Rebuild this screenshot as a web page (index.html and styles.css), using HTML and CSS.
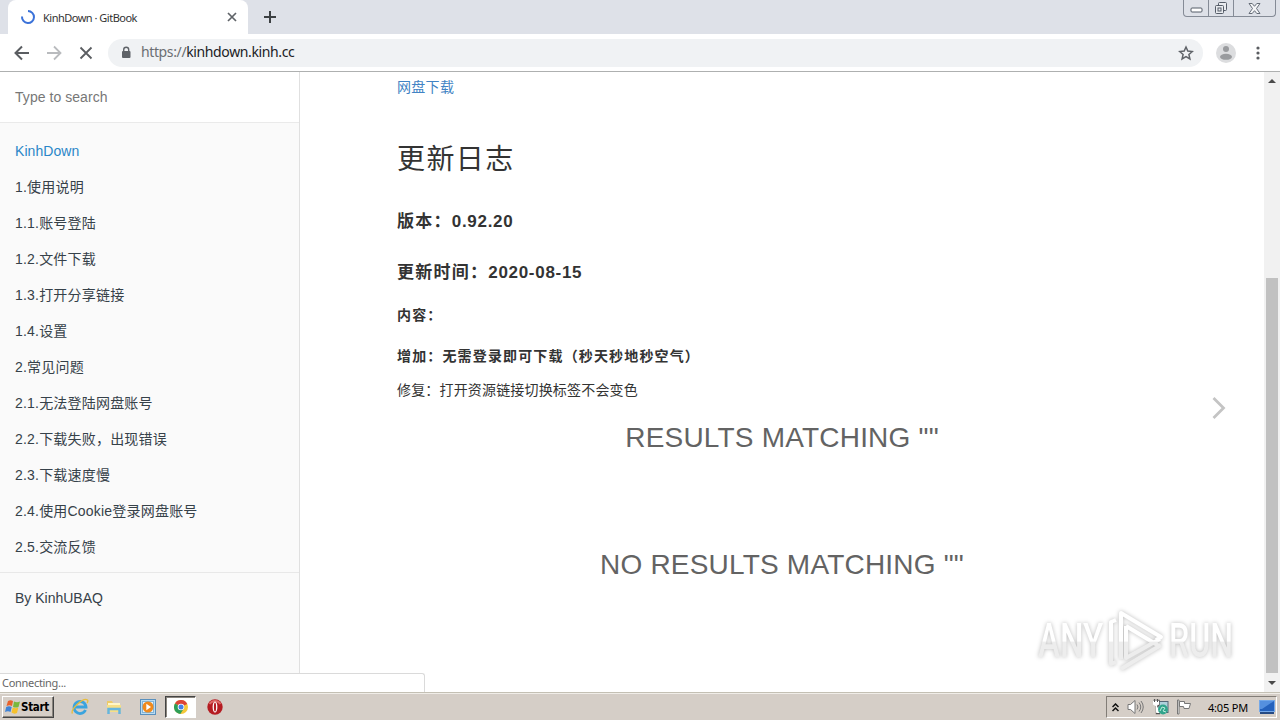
FILE: index.html
```html
<!DOCTYPE html>
<html lang="zh-CN">
<head>
    <meta charset="UTF-8">
    <meta name="viewport" content="width=device-width, initial-scale=1.0">
    <title>KinhDown · GitBook</title>
    <link rel="stylesheet" href="styles.css">
</head>
<body>

    <div class="tabstrip">
        <div class="tab">
            <svg class="spinner" width="16" height="16" viewBox="0 0 16 16"><path d="M8 2a6 6 0 1 1-6 5.5" fill="none" stroke="#3b72d9" stroke-width="2"/></svg>
            <span class="tab-title">KinhDown · GitBook</span>
            <svg class="tab-close" width="10" height="10" viewBox="0 0 10 10"><path d="M1 1l8 8M9 1l-8 8" stroke="#5f6368" stroke-width="1.7"/></svg>
        </div>
        <svg class="new-tab" width="12" height="12" viewBox="0 0 12 12"><path d="M6 0v12M0 6h12" stroke="#3c4043" stroke-width="2"/></svg>
        <div class="window-buttons">
            <span class="wb wb-min"><svg width="13" height="6" viewBox="0 0 13 6"><rect x="1" y="1" width="11" height="4" rx="1" fill="#fff" stroke="#555c68"/></svg></span>
            <span class="wb wb-max"><svg width="14" height="14" viewBox="0 0 14 14"><g fill="#e9ebef" stroke="#555c68"><rect x="4.500" y="1.500" width="8" height="8" rx="1"/><rect x="1.500" y="4.500" width="8" height="8" rx="1"/><rect x="4" y="7" width="3" height="3"/></g></svg></span>
            <span class="wb wb-close"><svg width="13" height="11" viewBox="0 0 13 11"><path d="M1 .500h3.200l2.300 2.800L8.800.500H12L8.500 5.500l3.500 5H8.800L6.500 7.700l-2.300 2.800H1l3.500-5z" fill="#f4f5f7" stroke="#666d78"/></svg></span>
        </div>
    </div>

    <div class="toolbar">
        <svg class="nav-icon" width="16" height="16" viewBox="0 0 16 16"><path d="M15 8H2M8 1.500L1.500 8 8 14.500" fill="none" stroke="#5a5d61" stroke-width="2"/></svg>
        <svg class="nav-icon" width="16" height="16" viewBox="0 0 16 16"><path d="M1 8h13M8 1.500L14.500 8 8 14.500" fill="none" stroke="#b9bbbe" stroke-width="1.800"/></svg>
        <svg class="nav-icon" width="16" height="16" viewBox="0 0 16 16"><path d="M2.500 2.500l11 11M13.500 2.500l-11 11" stroke="#5a5d61" stroke-width="1.800"/></svg>
        <div class="omnibox">
            <svg width="10" height="13" viewBox="0 0 10 13"><rect x="1" y="5" width="8.500" height="7" rx="1" fill="#5f6368"/><path d="M2.700 5.500V3.700a2.500 2.500 0 0 1 5 0v1.800" fill="none" stroke="#5f6368" stroke-width="1.400"/></svg>
            <span class="url"><span class="scheme">https://</span>kinhdown.kinh.cc</span>
            <svg class="star" width="16" height="16" viewBox="0 0 16 16"><path d="M8 2l1.800 4.100 4.500.400-3.400 3 1 4.400L8 11.600l-3.900 2.300 1-4.400-3.400-3 4.500-.400z" fill="none" stroke="#5f6368" stroke-width="1.500"/></svg>
        </div>
        <svg class="avatar" width="20" height="20" viewBox="0 0 20 20"><circle cx="10" cy="10" r="10" fill="#dcdddf"/><circle cx="10" cy="6" r="3" fill="#999b9e"/><ellipse cx="10" cy="13.800" rx="6" ry="3" fill="#999b9e"/></svg>
        <svg class="dots" width="4" height="14" viewBox="0 0 4 14"><g fill="#5a5d61"><circle cx="2" cy="2" r="1.600"/><circle cx="2" cy="7" r="1.600"/><circle cx="2" cy="12" r="1.600"/></g></svg>
    </div>

    <div class="book">
        <div class="sidebar">
            <div class="search">Type to search</div>
            <ul class="summary">
                <li class="active">KinhDown</li>
                <li>1.使用说明</li>
                <li>1.1.账号登陆</li>
                <li>1.2.文件下载</li>
                <li>1.3.打开分享链接</li>
                <li>1.4.设置</li>
                <li>2.常见问题</li>
                <li>2.1.无法登陆网盘账号</li>
                <li>2.2.下载失败，出现错误</li>
                <li>2.3.下载速度慢</li>
                <li>2.4.使用Cookie登录网盘账号</li>
                <li>2.5.交流反馈</li>
                <li class="divider"></li>
                <li class="author">By KinhUBAQ</li>
            </ul>
        </div>

        <div class="page">
            <div class="page-inner">
                <a class="top-link">网盘下载</a>
                <h1>更新日志</h1>
                <h3>版本：<b class="num">0.92.20</b></h3>
                <h3 class="date">更新时间：<b class="num">2020-08-15</b></h3>
                <h4>内容：</h4>
                <h4>增加：无需登录即可下载（秒天秒地秒空气）</h4>
                <p>修复：打开资源链接切换标签不会变色</p>
                <div class="results">RESULTS MATCHING ""</div>
                <div class="results no-results">NO RESULTS MATCHING ""</div>
            </div>
            <svg class="next" width="14" height="24" viewBox="0 0 14 24"><path d="M1.500 2l10 10-10 10" fill="none" stroke="#c4c4c4" stroke-width="2.800"/></svg>
            <div class="watermark">
                <span class="wm-text wm-any">ANY</span>
                <svg width="62" height="64" viewBox="0 0 62 64">
                    <defs>
                        <linearGradient id="fade" gradientUnits="userSpaceOnUse" x1="0" y1="0" x2="0" y2="64">
                            <stop offset=".5" stop-color="#fff"/>
                            <stop offset=".52" stop-color="#ededed"/>
                        </linearGradient>
                    </defs>
                    <path d="M11 11L6 13v42l5-2M16 50V4l40 24-5 3M21 17l33 20M21 17v32l34-19M16 60l40-24" fill="none" stroke="url(#fade)" stroke-width="4" stroke-linejoin="round"/>
                </svg>
                <span class="wm-text wm-run">RUN</span>
            </div>
        </div>

        <div class="scrollbar">
            <svg width="8" height="4" viewBox="0 0 8 4"><path d="M0 4l4-4 4 4z" fill="#4a4a4a"/></svg>
            <div class="thumb"></div>
            <svg width="8" height="4" viewBox="0 0 8 4"><path d="M0 0l4 4 4-4z" fill="#4a4a4a"/></svg>
        </div>
        <div class="status">Connecting...</div>
    </div>

    <div class="taskbar">
        <div class="start">
            <svg width="16" height="16" viewBox="0 0 16 16"><path d="M3 2c2-1 3-1 5 0L7 7C5 6 4 6 1.500 7z" fill="#e8622c"/><path d="M9 2.500c2 1 4 1 6 0L13.500 8c-2 1-3.500.500-5.500 0z" fill="#79b83c"/><path d="M1.200 8C3 7 5 7 6.700 8l-1.200 5C4 12 2 12 0 13z" fill="#3f83d6"/><path d="M7.800 8.500c2 1 3.500 1 5.500.300L12 14c-2 1-3.500 1-5.500-.400z" fill="#f6c12c"/></svg>
            <span>Start</span>
        </div>
        <div class="quick">
            <span class="task"><svg width="18" height="18" viewBox="0 0 18 18"><path d="M14.500 12A6 6 0 1 1 15 9H4" fill="none" stroke="#3ba4de" stroke-width="2.800"/><path d="M1.500 15.500C-1 12 12-1 16.500 2c.800 1 .300 2-.500 3" fill="none" stroke="#e8bd3c" stroke-width="1.300"/></svg></span>
            <span class="task"><svg width="18" height="18" viewBox="0 0 18 18"><path d="M2 3h5l1 2h7v9H2z" fill="#edca68"/><path d="M3 5h12v3H3z" fill="#fff6c8"/><path d="M2 7h14v7H2z" fill="#f6df88"/><path d="M3.500 16v-5h11v5" fill="none" stroke="#65b5df" stroke-width="2.500"/></svg></span>
            <span class="task"><svg width="16" height="16" viewBox="0 0 16 16"><rect x=".500" y=".500" width="15" height="15" fill="#b9dcf3" stroke="#5990bd"/><rect x="2.500" y="2.500" width="11" height="11" fill="#e6f2fa" stroke="#82b4d6"/><circle cx="8" cy="8" r="5.500" fill="#f08a1d"/><path d="M6.300 4.800v6.400L11 8z" fill="#fff"/></svg></span>
            <span class="task open"><svg width="14" height="14" viewBox="0 0 14 14"><circle cx="7" cy="7" r="7" fill="#f5c83a"/><path d="M7 7L1 3.400A7 7 0 0 1 13.200 4z" fill="#dd4437"/><path d="M7 7L1 3.400A7 7 0 0 0 6.300 14L9.500 9z" fill="#2e9e58"/><circle cx="7" cy="7" r="3.300" fill="#fff"/><circle cx="7" cy="7" r="2.500" fill="#4580e8"/></svg></span>
            <span class="task"><svg width="16" height="16" viewBox="0 0 16 16"><circle cx="8" cy="8" r="7.700" fill="#b51c22"/><path d="M2.500 5A6.500 6.500 0 0 1 13.500 5" fill="none" stroke="#dd6a68" stroke-width="2"/><ellipse cx="8" cy="8" rx="2.400" ry="5.500" fill="#fff"/><ellipse cx="8" cy="8" rx="1.100" ry="4.500" fill="#b51c22"/></svg></span>
        </div>
        <div class="tray">
            <svg class="chevrons" width="7" height="9" viewBox="0 0 7 9"><path d="M.500 4l3-3 3 3M.500 8l3-3 3 3" fill="none" stroke="#111" stroke-width="1.500"/></svg>
            <svg class="speaker" width="17" height="16" viewBox="0 0 17 16"><path d="M1 5.500h2.500L8 1.500v13l-4.500-4H1z" fill="#fff" stroke="#777"/><path d="M10 5.500q2 2.500 0 5M12 3.500q3.500 4.500 0 9M14 2q4.500 6 0 12" fill="none" stroke="#777"/></svg>
            <svg class="network" width="17" height="16" viewBox="0 0 17 16"><rect x="5" y="2.500" width="11" height="11" fill="#afd1dc" stroke="#567"/><path d="M1.500 2h5v4L5 7.500V14h3" fill="none" stroke="#555" stroke-width="2.400"/><path d="M1.500 2h5v3.500l-2.500 1-2.500-1zM4.500 6v7.500H8" fill="#fff" stroke="#fff"/><path d="M2.500 0v3M5.500 0v3" stroke="#555"/><circle cx="11" cy="10.500" r="4.900" fill="#31a58c"/><path d="M8 12l2-4 3 1-2 3 3 1" fill="none" stroke="#bfeadd"/></svg>
            <svg class="flag" width="16" height="16" viewBox="0 0 16 16"><path d="M1.500 1v14h1.500V1zM3.500 2.500h5v2h6l-1.500 5H8l-.500-2h-4z" fill="#fff" stroke="#777"/></svg>
            <span class="clock">4:05 PM</span>
            <svg class="desktop" width="16" height="14" viewBox="0 0 16 14"><rect x=".500" y=".500" width="15" height="11" fill="#2562bd" stroke="#74a8e8"/><path d="M1 1h14L3 9H1z" fill="#5590df"/><path d="M1 13h14" stroke="#264a83" stroke-width="2"/></svg>
        </div>
    </div>

</body>
</html>
```
FILE: styles.css
```css
* {
    box-sizing: border-box;
}

body {
    margin: 0;
    width: 1280px;
    height: 720px;
    overflow: hidden;
    display: flex;
    flex-direction: column;
    font-family: "Liberation Sans", "Noto Sans CJK SC", sans-serif;
    background-color: #fff;
    color: #333;
    white-space: nowrap;
}

svg {
    display: block;
    flex-shrink: 0;
}

/* browser window */
.tabstrip {
    display: flex;
    height: 34px;
    padding-left: 8px;
    background-color: #dee1e8;
}

.tab {
    display: flex;
    align-items: center;
    width: 240px;
    padding: 0 11px 0 12px;
    background-color: #fff;
    border-radius: 8px 8px 0 0;
}

.tab-title {
    flex: 1;
    margin-left: 7px;
    font: 11px "Noto Sans", sans-serif;
    letter-spacing: -0.5px;
}

.new-tab {
    margin: 11px 0 0 16px;
}

.window-buttons {
    display: flex;
    width: 93px;
    height: 17px;
    margin: 0 4px 0 auto;
    border: 1px solid #858b96;
    border-top: none;
    border-radius: 0 0 4px 4px;
}

.wb {
    display: flex;
    justify-content: center;
    align-items: center;
    width: 25px;
    border-right: 1px solid #858b96;
}

.wb-min {
    padding-top: 4px;
}

.wb-close {
    flex: 1;
    border-right: none;
}

.toolbar {
    display: flex;
    align-items: center;
    height: 38px;
    padding: 0 20px 0 14px;
    border-bottom: 1px solid #aeb0b0;
}

.nav-icon {
    margin-right: 16px;
}

.omnibox {
    display: flex;
    align-items: center;
    width: 1095px;
    height: 28px;
    margin-left: -2px;
    padding: 0 9px 0 13px;
    background-color: #f0f2f4;
    border-radius: 14px;
}

.url {
    flex: 1;
    margin: -2px 0 0 10px;
    font: 14px "Noto Sans", sans-serif;
    letter-spacing: -0.38px;
    color: #202124;
}

.scheme {
    color: #6b6e72;
}

.avatar {
    margin-left: 13px;
}

.dots {
    margin-left: auto;
}

/* book */
.book {
    position: relative;
    display: flex;
    height: 620px;
}

.sidebar {
    width: 300px;
    background-color: #fafafa;
    border-right: 1px solid #e0e0e0;
}

.search {
    height: 51px;
    padding-left: 15px;
    line-height: 51px;
    font-size: 14px;
    letter-spacing: 0.05px;
    color: #777;
    background-color: #fff;
    border-bottom: 1px solid #eaeaea;
}

.summary {
    margin: 0;
    padding: 10px 0 0;
    list-style: none;
}

.summary li {
    height: 36px;
    padding-left: 15px;
    line-height: 36px;
    font-size: 14px;
    letter-spacing: 0.2px;
    color: #364149;
}

.summary .active {
    letter-spacing: 0.05px;
    color: #2a86c8;
}

.summary .author {
    letter-spacing: 0;
}

.summary .divider {
    height: 1px;
    margin: 7px 0;
    background-color: #e8e8e8;
}

.page {
    position: relative;
    flex: 1;
}

.page-inner {
    width: 800px;
    margin: 0 auto;
    padding: 0 15px;
}

.top-link {
    display: block;
    height: 30px;
    line-height: 30px;
    font-size: 14px;
    letter-spacing: 0.3px;
    color: #4183c4;
}

h1, h3, h4, p {
    margin: 0;
    color: #333;
}

h1 {
    height: 42px;
    margin-top: 37px;
    line-height: 42px;
    font-size: 28px;
    font-weight: 400;
    letter-spacing: 1.4px;
}

h3 {
    height: 26px;
    margin-top: 28px;
    line-height: 26px;
    font-size: 17px;
    letter-spacing: 1.25px;
}

h3.date {
    margin-top: 25px;
}

.num {
    letter-spacing: 0.7px;
}

h4 {
    height: 24px;
    margin-top: 17px;
    line-height: 24px;
    font-size: 14px;
    letter-spacing: 1.15px;
}

h4 + h4 {
    margin-top: 17px;
}

p {
    height: 24px;
    margin-top: 10px;
    line-height: 24px;
    font-size: 14px;
    letter-spacing: 0.17px;
}

.results {
    height: 40px;
    margin-top: 16px;
    line-height: 40px;
    font-size: 28px;
    letter-spacing: 0.2px;
    text-align: center;
    color: #636363;
}

.no-results {
    margin-top: 87px;
}

.next {
    position: absolute;
    left: 912px;
    top: 324px;
}

.watermark {
    position: absolute;
    left: 738px;
    top: 537px;
    display: flex;
    align-items: center;
    width: 196px;
    height: 64px;
    filter: drop-shadow(0 0 2px #bbb);
}

.watermark svg {
    margin: 0 3px 0 67px;
}

.wm-text {
    position: absolute;
    left: 0;
    font: 500 48px/66px Roboto, sans-serif;
    color: transparent;
    background: linear-gradient(#fff 50%, #ededed 52%);
    background-clip: text;
    -webkit-background-clip: text;
    transform: scaleX(0.69);
    transform-origin: left;
}

.wm-run {
    left: 131px;
    transform: scaleX(0.67);
}

.scrollbar {
    display: flex;
    flex-direction: column;
    align-items: center;
    width: 16px;
    padding: 7px 0;
    background-color: #f1f1f1;
}

.thumb {
    width: 12px;
    height: 395px;
    margin: auto 0 8px;
    background-color: #c1c1c1;
}

.status {
    position: absolute;
    left: 0;
    bottom: 0;
    width: 425px;
    height: 19px;
    padding-left: 2px;
    line-height: 18px;
    font-family: "Noto Sans", sans-serif;
    font-size: 11px;
    letter-spacing: -0.3px;
    color: #666;
    background-color: #fff;
    border: 1px solid #dadada;
    border-left: none;
    border-bottom: none;
    border-radius: 0 3px 0 0;
}

/* taskbar */
.taskbar {
    display: flex;
    height: 28px;
    padding: 3px 3px 3px 2px;
    background-color: #d5cec7;
    border-top: 1px solid #c4c0b4;
    box-shadow: inset 0 1px #f0ede8;
}

.start {
    display: flex;
    align-items: center;
    width: 52px;
    height: 22px;
    padding-left: 2px;
    font: bold 11.5px "DejaVu Sans Condensed", "DejaVu Sans", sans-serif;
    letter-spacing: -0.3px;
    color: #000;
    border: 1px solid;
    border-color: #fff #444 #444 #fff;
    box-shadow: inset -1px -1px #8a857e;
}

.quick {
    display: flex;
    margin-left: 9px;
}

.task {
    display: flex;
    justify-content: center;
    align-items: center;
    width: 34px;
    height: 22px;
}

.open {
    width: 31px;
    margin: 0 2px 0 0;
    background-color: #fff;
    border: 1px solid;
    border-color: #444 #fff #fff #444;
    box-shadow: inset 1px 1px #8a857e;
}

.tray {
    display: flex;
    align-items: center;
    width: 171px;
    height: 22px;
    margin-left: auto;
    padding-left: 5px;
    border: 1px solid;
    border-color: #827d77 #fff #fff #827d77;
}

.speaker {
    margin-left: 8px;
}

.network {
    margin-left: 8px;
}

.flag {
    margin-left: 7px;
}

.clock {
    width: 43px;
    margin-left: 16px;
    font: 11px "Noto Sans", sans-serif;
    letter-spacing: -0.2px;
    color: #000;
}

.desktop {
    margin-left: 8px;
}
```
